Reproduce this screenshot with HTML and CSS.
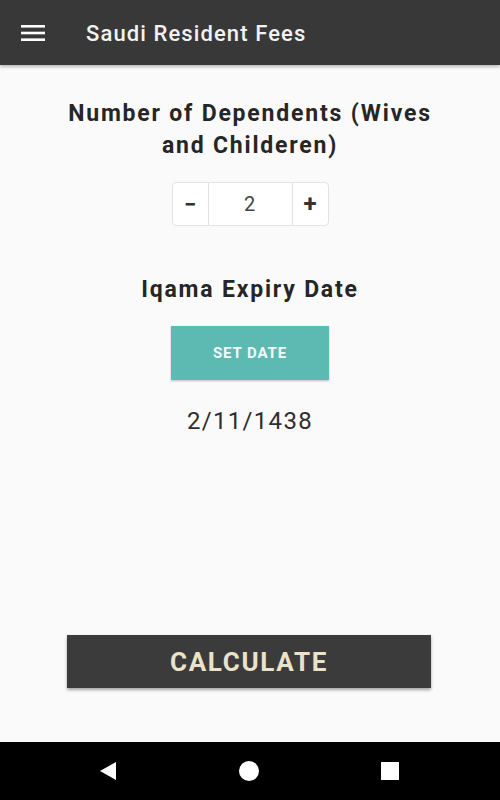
FILE: index.html
```html
<!DOCTYPE html>
<html>
<head>
<meta charset="utf-8">
<link rel="stylesheet" href="styles.css">
</head>
<body>
<div class="screen">
  <header class="appbar">
    <svg class="menu" width="24" height="16" viewBox="0 0 24 16"><rect x="0" y="0" width="24" height="2.6" fill="#fff"/><rect x="0" y="6.7" width="24" height="2.6" fill="#fff"/><rect x="0" y="13.4" width="24" height="2.6" fill="#fff"/></svg>
    <span class="title">Saudi Resident Fees</span>
  </header>
  <main class="content">
    <h2 class="label">Number of Dependents (Wives and Childeren)</h2>
    <div class="stepper">
      <div class="step minus">−</div>
      <div class="value">2</div>
      <div class="step plus">+</div>
    </div>
    <h2 class="label label2">Iqama Expiry Date</h2>
    <div class="setdate">SET DATE</div>
    <div class="date">2/11/1438</div>
    <div class="spacer"></div>
    <div class="calc">CALCULATE</div>
  </main>
  <nav class="navbar">
    <svg width="20" height="20" viewBox="0 0 20 20"><polygon points="18,1 18,19 2,10" fill="#fff"/></svg>
    <svg width="22" height="22" viewBox="0 0 22 22"><circle cx="11" cy="11" r="10" fill="#fff"/></svg>
    <svg width="20" height="20" viewBox="0 0 20 20"><rect x="1" y="1" width="18" height="18" fill="#fff"/></svg>
  </nav>
</div>
</body>
</html>
```
FILE: styles.css
```css
* { box-sizing: border-box; }
html, body { margin: 0; padding: 0; }
body { font-family: Roboto, "Noto Sans", sans-serif; background: #fafafa; }
.screen { width: 500px; height: 800px; display: flex; flex-direction: column; }
.appbar {
  height: 65px; background: #383838; display: flex; align-items: center;
  padding-left: 21px; box-shadow: 0 2px 3px rgba(0,0,0,0.25); flex: none;
}
.menu { margin-top: 1px; }
.title { color: #f2f2f2; font-size: 22px; font-weight: 500; letter-spacing: 1.1px; margin-left: 41px; margin-top: 2px; }
.content { flex: 1; display: flex; flex-direction: column; align-items: center; padding-top: 33px; }
.label { margin: 0; font-size: 23px; font-weight: 700; letter-spacing: 1.8px; color: #262626; text-align: center; line-height: 32px; width: 400px; }
.stepper {
  margin-top: 20px; display: flex; height: 44px; border: 1px solid #e2e2e2; border-radius: 4px;
  background: #fff; width: 157px;
}
.step { width: 36px; display: flex; align-items: center; justify-content: center; font-size: 24px; color: #333; font-weight: 700; }
.minus { border-right: 1px solid #e2e2e2; font-size: 22px; }
.plus { border-left: 1px solid #e2e2e2; }
.value { flex: 1; display: flex; align-items: center; justify-content: center; font-size: 20px; color: #444; letter-spacing: 1px; }
.label2 { margin-top: 48px; }
.setdate {
  margin-top: 20px; width: 158px; height: 54px; background: #5cbab3; color: #f3f9f8;
  display: flex; align-items: center; justify-content: center; font-size: 15px; font-weight: 700; letter-spacing: 0.9px;
  box-shadow: 0 1px 2px rgba(0,0,0,0.25);
}
.date { margin-top: 27px; font-size: 24px; color: #2e2e2e; letter-spacing: 1.3px; }
.spacer { flex: 1; }
.calc {
  width: 364px; height: 53px; background: #3b3b3b; color: #ebe3c9; font-size: 26px; font-weight: 700; letter-spacing: 1.7px;
  display: flex; align-items: center; justify-content: center; margin-bottom: 54px; margin-left: -2px;
  box-shadow: 0 2px 3px rgba(0,0,0,0.35);
}
.navbar {
  height: 58px; background: #000; display: flex; align-items: center;
  flex: none; justify-content: space-between; padding: 0 100px 0 98px;
}
```
